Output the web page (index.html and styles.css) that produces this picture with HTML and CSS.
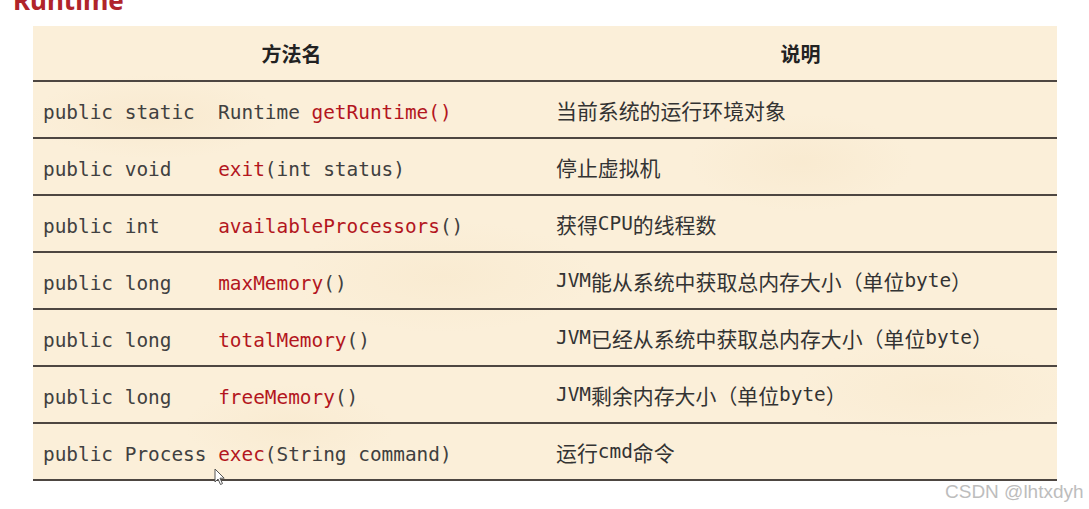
FILE: index.html
```html
<!DOCTYPE html>
<html lang="zh-CN">
<head>
<meta charset="utf-8">
<title>Runtime</title>
<link rel="stylesheet" href="styles.css">
</head>
<body>
<h1 class="title">Runtime</h1>
<div class="table">
  <div class="head">方法名</div>
  <div class="head">说明</div>

  <div class="cell code">public static  Runtime <span class="fn">getRuntime()</span></div>
  <div class="cell desc">当前系统的运行环境对象</div>

  <div class="cell code">public void    <span class="fn">exit</span>(int status)</div>
  <div class="cell desc">停止虚拟机</div>

  <div class="cell code">public int     <span class="fn">availableProcessors</span>()</div>
  <div class="cell desc">获得<span class="m">CPU</span>的线程数</div>

  <div class="cell code">public long    <span class="fn">maxMemory</span>()</div>
  <div class="cell desc"><span class="m">JVM</span>能从系统中获取总内存大小（单位<span class="m">byte</span>）</div>

  <div class="cell code">public long    <span class="fn">totalMemory</span>()</div>
  <div class="cell desc"><span class="m">JVM</span>已经从系统中获取总内存大小（单位<span class="m">byte</span>）</div>

  <div class="cell code">public long    <span class="fn">freeMemory</span>()</div>
  <div class="cell desc"><span class="m">JVM</span>剩余内存大小（单位<span class="m">byte</span>）</div>

  <div class="cell code last">public Process <span class="fn">exec</span>(String command)</div>
  <div class="cell desc last">运行<span class="m">cmd</span>命令</div>
</div>
<svg class="cursor" width="12" height="18" viewBox="0 0 12 18" aria-hidden="true">
  <path d="M1 1 L1 14 L4 11 L6.5 16.5 L8.5 15.6 L6 10.2 L10.2 10.2 Z" fill="#fff" stroke="#555" stroke-width="1" stroke-linejoin="round"/>
</svg>
<div class="watermark">CSDN @lhtxdyh</div>
</body>
</html>
```

FILE: styles.css
```css
html, body {
  margin: 0;
  padding: 0;
  background: #ffffff;
}

body {
  position: relative;
  width: 1089px;
  height: 509px;
  overflow: hidden;
}

.title {
  margin: -13px 0 0 13px;
  height: 26px;
  font-family: "Noto Sans", "Noto Sans CJK SC", sans-serif;
  font-weight: 700;
  font-size: 26px;
  line-height: 26px;
  color: #b0242a;
}

.table {
  margin: 13px 0 0 33px;
  width: 1024px;
  display: grid;
  grid-template-columns: 523px 501px;
  background-color: #fbefd9;
  background-image:
    radial-gradient(ellipse 180px 60px at 12% 20%, rgba(244, 224, 190, 0.35), transparent 70%),
    radial-gradient(ellipse 220px 80px at 40% 55%, rgba(245, 226, 192, 0.30), transparent 70%),
    radial-gradient(ellipse 160px 70px at 75% 30%, rgba(244, 224, 190, 0.30), transparent 70%),
    radial-gradient(ellipse 200px 70px at 88% 80%, rgba(246, 228, 196, 0.30), transparent 70%),
    radial-gradient(ellipse 150px 60px at 25% 88%, rgba(245, 226, 192, 0.30), transparent 70%);
}

.head {
  height: 54px;
  border-bottom: 2px solid #4d4641;
  display: flex;
  align-items: center;
  justify-content: center;
  font-family: "Noto Sans CJK SC", sans-serif;
  font-weight: 700;
  font-size: 20px;
  color: #222222;
}

.head:first-child {
  padding-right: 6px;
}

.head:nth-child(2) {
  padding-right: 12px;
}

.cell {
  height: 55px;
  border-bottom: 2px solid #4d4641;
  display: flex;
  align-items: center;
  white-space: pre;
}

.code {
  padding-left: 10px;
  padding-top: 5px;
  height: 50px;
  font-family: "DejaVu Sans Mono", "Liberation Mono", monospace;
  font-size: 19.4px;
  color: #404040;
}

.fn {
  color: #b3161e;
}

.desc {
  font-family: "Noto Sans CJK SC", sans-serif;
  font-size: 20.9px;
  color: #333333;
}

.m {
  font-family: "DejaVu Sans Mono", "Liberation Mono", monospace;
  font-size: 19.4px;
}

.cursor {
  position: absolute;
  left: 214px;
  top: 468px;
}

.watermark {
  position: absolute;
  left: 945px;
  top: 481px;
  font-family: "Liberation Sans", Arial, sans-serif;
  font-size: 19px;
  line-height: 22px;
  color: #bdbdbd;
  text-shadow: 0 0 1px #ffffff;
}
```
